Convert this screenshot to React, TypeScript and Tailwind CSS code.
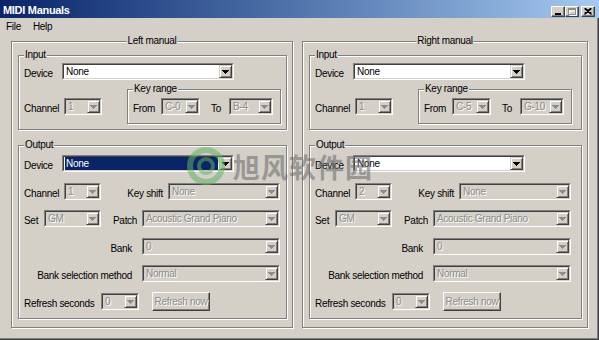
import type { ReactNode } from 'react'

const face = "font-['Liberation_Sans',Arial,sans-serif]"
const dimText = 'text-[#8c8c8c] [text-shadow:1px_1px_0_#ffffff]'

function Arrow({ disabled }: { disabled?: boolean }) {
  return (
    <svg width="7" height="4" viewBox="0 0 7 4" className="shrink-0">
      <path d="M0 0h7v1H0z M1 1h5v1H1z M2 2h3v1H2z M3 3h1v1H3z" fill={disabled ? '#8c8c8c' : '#000'} />
    </svg>
  )
}

interface ComboProps {
  className: string
  value: string
  disabled?: boolean
  selected?: boolean
}

function Combo({ className, value, disabled = true, selected = false }: ComboProps) {
  return (
    <div className={`flex h-[17px] shrink-0 border border-t-[#808080] border-l-[#808080] border-b-white border-r-white ${className}`}>
      <div className={`flex min-w-0 flex-1 border border-t-[#404040] border-l-[#404040] border-b-[#d4d0c8] border-r-[#d4d0c8] ${disabled ? 'bg-[#d4d0c8]' : 'bg-white'}`}>
        <div className="flex min-w-0 flex-1 items-center px-[1px]">
          <span
            className={`h-[13px] px-[1px] leading-[13px] whitespace-nowrap ${
              selected ? 'flex-1 bg-[#0a246a] text-white' : disabled ? dimText : 'text-black'
            }`}
          >
            {value}
          </span>
        </div>
        <div className="flex w-[13px] shrink-0 items-center justify-center border border-t-[#d4d0c8] border-l-[#d4d0c8] border-b-[#404040] border-r-[#404040] bg-[#d4d0c8] shadow-[inset_1px_1px_0_#ffffff,inset_-1px_-1px_0_#808080]">
          <Arrow disabled={disabled} />
        </div>
      </div>
    </div>
  )
}

interface GroupProps {
  label: string
  className: string
  center?: boolean
  children: ReactNode
}

function Group({ label, className, center = false, children }: GroupProps) {
  return (
    <div className={`relative border border-[#808080] shadow-[inset_1px_1px_0_#ffffff,1px_1px_0_#ffffff] ${className}`}>
      <span
        className={`absolute top-[-7px] bg-[#d4d0c8] px-[1px] leading-[12px] whitespace-nowrap ${
          center ? 'left-1/2 -translate-x-1/2' : 'left-[5px]'
        }`}
      >
        {label}
      </span>
      {children}
    </div>
  )
}

function Label({ className = '', children }: { className?: string; children: ReactNode }) {
  return <span className={`shrink-0 pt-[5px] leading-[12px] whitespace-nowrap ${className}`}>{children}</span>
}

interface ManualProps {
  title: string
  className: string
  from: string
  to: string
  channel: string
}

function Manual({ title, className, from, to, channel }: ManualProps) {
  return (
    <Group label={title} center className={`h-[287px] pt-[13px] pl-[6px] pr-[5px] ${className}`}>
      <Group label="Input" className="h-[75px] pt-[7px] pl-[5px]">
        <div className="flex h-[17px] items-center">
          <Label className="w-[38px]">Device</Label>
          <Combo className="w-[172px]" value="None" disabled={false} />
        </div>
        <div className="mt-[9px] flex h-[35px]">
          <div className="flex items-center self-start pt-[9px]">
            <Label className="w-[40px]">Channel</Label>
            <Combo className="w-[38px]" value="1" />
          </div>
          <Group label="Key range" className="ml-[25px] h-[35px] w-[154px] pt-[8px] pl-[5px]">
            <div className="flex items-center">
              <Label className="w-[28px]">From</Label>
              <Combo className="w-[39px]" value={from} />
              <Label className="ml-[11px] w-[18px]">To</Label>
              <Combo className="w-[44px]" value={to} />
            </div>
          </Group>
        </div>
      </Group>

      <Group label="Output" className="mt-[15px] h-[174px] pt-[9px] pl-[5px]">
        <div className="flex h-[17px] items-center">
          <Label className="w-[38px]">Device</Label>
          <Combo className="w-[172px]" value="None" disabled={false} selected={channel === '1'} />
        </div>
        <div className="mt-[11px] flex h-[17px] items-center">
          <Label className="w-[40px]">Channel</Label>
          <Combo className="w-[37px]" value={channel} />
          <Label className="w-[67px] pr-[5px] text-right">Key shift</Label>
          <Combo className="w-[112px]" value="None" />
        </div>
        <div className="mt-[10px] flex h-[17px] items-center">
          <Label className="w-[20px]">Set</Label>
          <Combo className="w-[57px]" value="GM" />
          <Label className="ml-[12px] w-[29px]">Patch</Label>
          <Combo className="w-[138px]" value="Acoustic Grand Piano" />
        </div>
        <div className="mt-[11px] flex h-[17px] items-center">
          <Label className="w-[118px] pr-[10px] text-right">Bank</Label>
          <Combo className="w-[138px]" value="0" />
        </div>
        <div className="mt-[10px] flex h-[17px] items-center">
          <Label className="w-[118px] pr-[10px] text-right">Bank selection method</Label>
          <Combo className="w-[138px]" value="Normal" />
        </div>
        <div className="mt-[11px] flex h-[17px] items-center">
          <Label className="w-[77px]">Refresh seconds</Label>
          <Combo className="w-[38px]" value="0" />
          <div
            className={`ml-[13px] flex h-[19px] w-[58px] items-center justify-center border border-t-white border-l-white border-b-[#404040] border-r-[#404040] shadow-[inset_-1px_-1px_0_#808080] ${dimText}`}
          >
            Refresh now
          </div>
        </div>
      </Group>
    </Group>
  )
}

function CaptionButton({ children }: { children: ReactNode }) {
  return (
    <div className="flex h-[11px] w-[14px] items-center justify-center border border-t-white border-l-white border-b-[#404040] border-r-[#404040] bg-[#d4d0c8] shadow-[inset_-1px_-1px_0_#808080]">
      {children}
    </div>
  )
}

export default function App() {
  return (
    <div
      className={`relative h-[340px] w-[599px] overflow-hidden bg-[#d4d0c8] text-[10px] tracking-[-0.3px] text-black shadow-[inset_-1px_-1px_0_#404040,inset_-2px_-2px_0_#808080] ${face}`}
    >
      <div className="flex h-[18px] items-center bg-linear-to-r from-[#0a246a] to-[#a6caf0] pr-[4px] pl-[3px]">
        <span className="pt-[3px] text-[11px] font-bold text-white">MIDI Manuals</span>
        <div className="ml-auto flex items-center self-end pb-[1px]">
          <CaptionButton>
            <svg width="6" height="6" viewBox="0 0 6 6">
              <rect x="0" y="4" width="6" height="2" fill="#000" />
            </svg>
          </CaptionButton>
          <CaptionButton>
            <svg width="9" height="8" viewBox="0 0 9 8">
              <path d="M1.5 1.5h7v6h-7z M1 1h8v2H1z" fill="none" stroke="#ffffff" strokeWidth="1" />
              <path d="M0.5 0.5h7v6h-7z" fill="none" stroke="#8c8c8c" strokeWidth="1" />
              <rect x="0" y="0" width="8" height="2" fill="#8c8c8c" />
            </svg>
          </CaptionButton>
          <div className="ml-[2px]">
            <CaptionButton>
              <svg width="8" height="7" viewBox="0 0 8 7">
                <path d="M0.5 0.5l7 6 M7.5 0.5l-7 6 M1.5 0.5l6 5 M6.5 0.5l-6 5" stroke="#000" strokeWidth="1.2" />
              </svg>
            </CaptionButton>
          </div>
        </div>
      </div>

      <div className="flex h-[16px] items-center gap-[12px] pl-[6px]">
        <span>File</span>
        <span>Help</span>
      </div>

      <div className="flex gap-[9px] pt-[7px] pl-[11px]">
        <Manual title="Left manual" className="w-[282px]" from="C-0" to="B-4" channel="1" />
        <Manual title="Right manual" className="w-[286px]" from="C-5" to="G-10" channel="2" />
      </div>

      {/* watermark over the dialog */}
      <div className="pointer-events-none absolute top-[146px] left-[185px] flex items-center opacity-55">
        <svg width="42" height="40" viewBox="0 0 42 40">
          <circle cx="21" cy="20" r="16" fill="none" stroke="#5fb35f" strokeWidth="6" />
          <circle cx="21" cy="20" r="7" fill="none" stroke="#5fb35f" strokeWidth="4" />
        </svg>
        <span className="ml-[6px] font-['Noto_Sans_CJK_SC',sans-serif] text-[27px] leading-none font-bold tracking-[1px] text-[#6a6a6a]">
          旭风软件园
        </span>
      </div>
    </div>
  )
}
